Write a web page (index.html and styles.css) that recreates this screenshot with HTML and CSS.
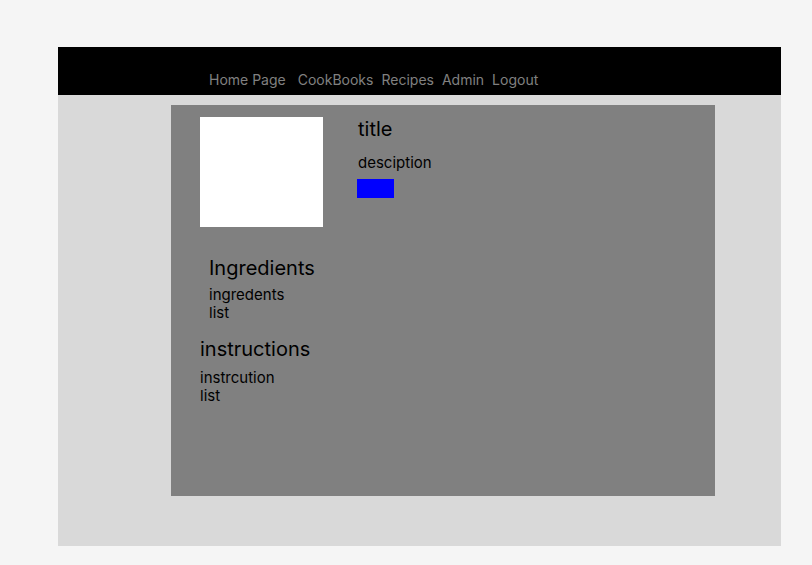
FILE: index.html
```html
<!DOCTYPE html>
<html lang="en">
<head>
<meta charset="utf-8">
<title>Recipe</title>
<link rel="stylesheet" href="styles.css">
</head>
<body>
<div class="page">
  <header class="topbar">
    <nav class="nav">
      <a class="home" href="#">Home Page</a>
      <a href="#">CookBooks</a>
      <a href="#">Recipes</a>
      <a href="#">Admin</a>
      <a href="#">Logout</a>
    </nav>
  </header>
  <main class="recipe">
    <section class="summary">
      <div class="photo"></div>
      <div class="intro">
        <h1>title</h1>
        <p>desciption</p>
        <button class="action" type="button" aria-label="Open"></button>
      </div>
    </section>
    <section class="ingredients">
      <h2>Ingredients</h2>
      <p>ingredents<br>list</p>
    </section>
    <section class="instructions">
      <h2>instructions</h2>
      <p>instrcution<br>list</p>
    </section>
  </main>
</div>
</body>
</html>
```

FILE: styles.css
```css
* {
  box-sizing: border-box;
}

body {
  margin: 0;
  padding: 47px 31px 19px 58px;
  min-height: 100vh;
  display: flex;
  background: #f5f5f5;
  color: #000;
  font: 15px/18px Inter, sans-serif;
}

.page {
  flex: 1;
  background: #d9d9d9;
}

.topbar {
  padding: 24px 0 6px 151px;
  background: #000;
}

.nav {
  display: flex;
  gap: 8px;
  font-size: 14px;
}

.nav a {
  color: #808080;
  text-decoration: none;
}

.home {
  margin-right: 4px;
}

.recipe {
  margin: 10px 66px 50px 113px;
  padding: 12px 29px 91px;
  background: #808080;
}

h1,
h2,
p {
  margin: 0;
}

h1,
h2 {
  font-size: 20px;
  font-weight: 400;
  line-height: 24px;
}

.summary {
  display: flex;
  gap: 34px;
}

.photo {
  width: 123px;
  height: 110px;
  background: #fff;
}

.intro h1,
.intro p {
  padding-left: 1px;
}

.intro p {
  margin-top: 13px;
}

.action {
  display: block;
  width: 37px;
  height: 19px;
  margin-top: 7px;
  padding: 0;
  border: 0;
  background: #00f;
}

.ingredients {
  margin-top: 29px;
  padding-left: 9px;
}

.ingredients p {
  margin-top: 6px;
}

.instructions {
  margin-top: 15px;
}

.instructions p {
  margin-top: 8px;
}
```
